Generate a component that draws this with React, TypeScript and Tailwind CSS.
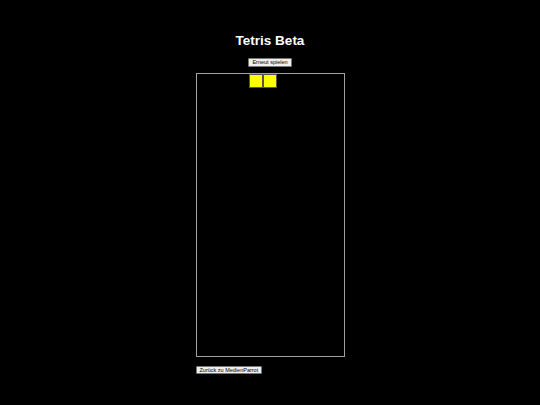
export default function App() {
  // visible part of the falling O piece (board-relative px)
  const cells = [{ x: 53 }, { x: 67 }];

  return (
    <div className="min-h-[405px] w-full bg-black font-['Liberation_Sans',Arial,sans-serif] flex flex-col items-center pt-[33px]">
      <h1 className="text-white text-[13.5px] leading-[16px] font-bold h-[16px]">Tetris Beta</h1>

      <button className="mt-[9px] h-[9px] px-[3px] bg-[#efefef] border border-[#767676] rounded-[1px] text-black text-[5.5px] leading-[7px] flex items-center">
        Erneut spielen
      </button>

      <div className="mt-[6px] flex flex-col">
        <div className="relative w-[149px] h-[284px] border border-[#a0a0a0]">
          {cells.map((c) => (
            <div
              key={c.x}
              className="absolute top-0 w-[14px] h-[14px] bg-[#ffff00] border border-[#555]"
              style={{ left: c.x - 1 }}
            />
          ))}
        </div>
        <div className="mt-[9px]">
          <button className="h-[8px] px-[3px] bg-[#efefef] border border-[#767676] rounded-[1px] text-black text-[5.5px] leading-[6px] flex items-center">
            Zurück zu MedienParrot
          </button>
        </div>
      </div>
    </div>
  );
}
